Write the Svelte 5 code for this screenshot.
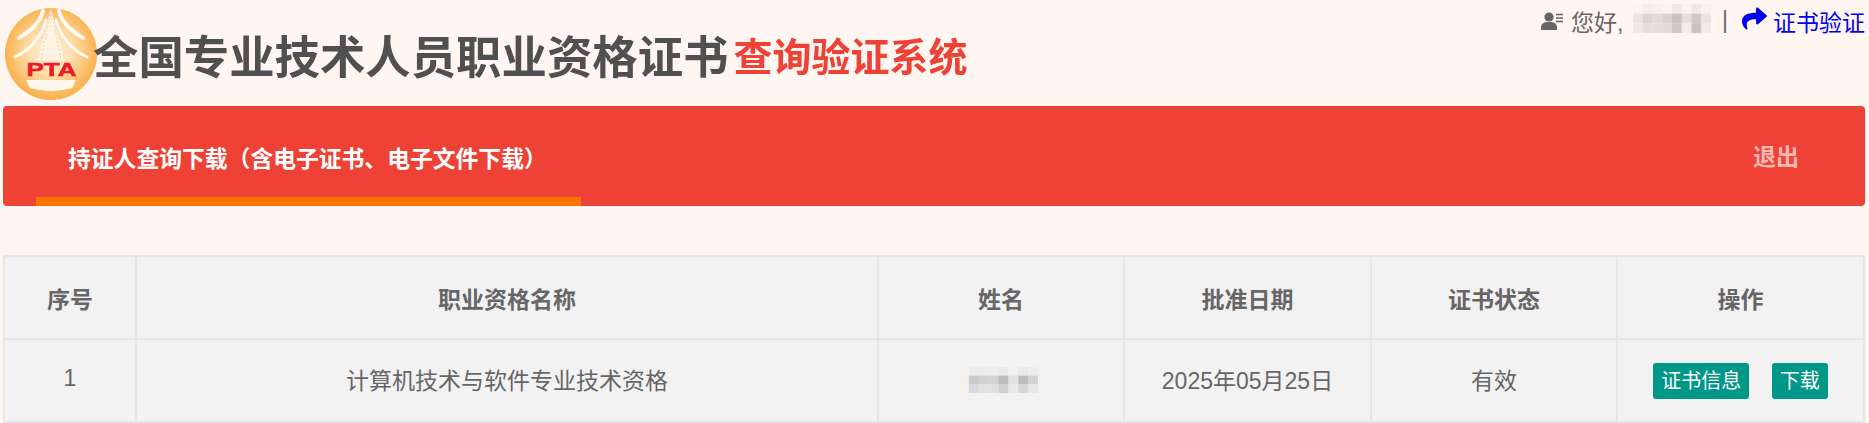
<script lang="ts">
    // mosaic blocks covering the person's name, row by row
    const topMosaic = [
        ["#fdf3ef", "#f5ecea", "#f8eeeb", "#fbf1ed", "#f2e9e6", "#fbf1ed", "#f0e7e4", "#faf0ec"],
        ["#ebe5e2", "#dbd5d3", "#e2dcd9", "#d9d4d1", "#c8c4c1", "#e6dfdc", "#cfcbc8", "#eae4e1"],
        ["#f0e9e6", "#e5dfdc", "#e3dddb", "#e2dcd9", "#cfcac7", "#f5ece8", "#c6c3c1", "#f3ebe8"],
    ];
    const nameMosaic = [
        ["#f6f1ec", "#e9ebec", "#ebebeb", "#ececec", "#e9eaea", "#f1f2f2", "#e8e8e6", "#ededec"],
        ["#f5efe9", "#c8c9ca", "#d0d3d4", "#d4d5d3", "#bcbcba", "#e0e3e3", "#bcbdba", "#d0d2d3"],
        ["#f6f0ea", "#d6d8dc", "#e0e1e0", "#e0e0de", "#cfd0cc", "#e7e8ea", "#d6d6d2", "#e5e6ea"],
    ];

    const columns = ["序号", "职业资格名称", "姓名", "批准日期", "证书状态", "操作"];
</script>

<svelte:head>
    <title>全国专业技术人员职业资格证书查询验证系统</title>
</svelte:head>

{#snippet mosaic(rows, cls)}
    <svg class={cls} viewBox="0 0 80 30" preserveAspectRatio="none" aria-hidden="true">
        {#each rows as row, y}
            {#each row as fill, x}
                <rect x={x * 10} y={y * 10} width="10.2" height="10.2" {fill} />
            {/each}
        {/each}
    </svg>
{/snippet}

<div class="page">
    <header>
        <div class="brand">
            <svg class="logo" viewBox="0 0 100 100" aria-hidden="true">
                <defs>
                    <radialGradient id="disc" cx="50%" cy="48%" r="50%">
                        <stop offset="0%" stop-color="#fff4e6" />
                        <stop offset="50%" stop-color="#fddcaa" />
                        <stop offset="100%" stop-color="#f9b24e" />
                    </radialGradient>
                </defs>
                <circle cx="51" cy="52" r="46" fill="url(#disc)" />
                <g fill="none" stroke="#fff8ef" stroke-linecap="round">
                    <path d="M43 9 C39 24 28 30 19 36" stroke-width="4" />
                    <path d="M59 9 C63 24 74 30 83 36" stroke-width="4" />
                    <path d="M46 18 C41 36 30 48 15 55" stroke-width="3" />
                    <path d="M56 18 C61 36 72 48 87 55" stroke-width="3" />
                </g>
                <path d="M51 6 L38 58 L64 58 Z" fill="#fff3e4" />
                <path d="M51 8 L41 58 M51 8 L61 58" stroke="#f6c9a5" stroke-width="1" stroke-dasharray="2 2" />
                <path d="M26 78 H76 L72 86 Q51 92 30 86 Z" fill="#fff8ef" />
                <text x="26.5" y="73.5" class="pta" textLength="50" lengthAdjust="spacingAndGlyphs">PTA</text>
            </svg>
            <h1>全国专业技术人员职业资格证书<span>查询验证系统</span></h1>
        </div>
        <div class="user">
            <svg class="user-icon" viewBox="0 0 24 18" aria-hidden="true">
                <circle cx="8" cy="5" r="4.6" fill="#666" />
                <path d="M0 18 V15.5 C0 12 3 10.2 5.5 10 H10.5 C13 10.2 16 12 16 15.5 V18 Z" fill="#666" />
                <path d="M15 2.5 H22 M15 6 H22 M15 9.5 H22" stroke="#666" stroke-width="1.4" />
            </svg>
            <span class="hello">您好,</span>
            {@render mosaic(topMosaic, "top-mosaic")}
            <span class="sep">|</span>
            <a href="#verify">
                <svg class="share" viewBox="0 0 512 512" aria-hidden="true">
                    <path d="M503.7 189.8 327.7 37.9C312.3 24.6 288 35.4 288 56v80C127.4 137.8 0 170 0 322.3c0 61.5 39.6 122.4 83.4 154.2 13.7 9.9 33.1-2.5 28.1-18.6C66 312.4 133 273.3 288 271v84c0 20.6 24.3 31.5 39.7 18.2l176-152c11.1-9.6 11.1-21.8 0-31.4z" fill="#0000ee" />
                </svg>
                证书验证
            </a>
        </div>
    </header>

    <nav>
        <a class="tab" href="#query">持证人查询下载（含电子证书、电子文件下载）</a>
        <a class="logout" href="#logout">退出</a>
    </nav>

    <table>
        <colgroup>
            <col class="c-no" />
            <col class="c-title" />
            <col class="c-std" />
            <col class="c-std2" />
            <col class="c-std" />
            <col class="c-std2" />
        </colgroup>
        <thead>
            <tr>
                {#each columns as col}
                    <th>{col}</th>
                {/each}
            </tr>
        </thead>
        <tbody>
            <tr>
                <td>1</td>
                <td>计算机技术与软件专业技术资格</td>
                <td>{@render mosaic(nameMosaic, "name-mosaic")}</td>
                <td>2025年05月25日</td>
                <td>有效</td>
                <td class="actions">
                    <button>证书信息</button>
                    <button>下载</button>
                </td>
            </tr>
        </tbody>
    </table>
</div>

<style>
    :global(body) {
        background: #fff5f1;
    }

    .page {
        font-family: "Liberation Sans", "Noto Sans CJK SC", sans-serif;
        color: #666;
        font-size: 23px;
    }

    header {
        height: 106px;
        display: flex;
        justify-content: space-between;
        align-items: flex-start;
        padding-right: 4px;
    }

    .brand {
        display: flex;
        align-items: flex-start;
    }

    .logo {
        width: 100px;
        height: 100px;
        margin-top: 2px;
        flex: none;
        filter: blur(0.5px);
    }

    .pta {
        font-family: "Liberation Sans", sans-serif;
        font-weight: 700;
        font-size: 19px;
        fill: #ee1c25;
        stroke: #ee1c25;
        stroke-width: 0.6;
    }

    h1 {
        margin: 21px 0 0 -7px;
        font-family: "Noto Sans CJK SC", sans-serif;
        font-size: 45.4px;
        line-height: 66px;
        font-weight: 700;
        color: #505050;
        white-space: nowrap;
        filter: blur(0.6px);
    }

    h1 span {
        margin-left: 5px;
        font-size: 39px;
        color: #ee4236;
        vertical-align: 3px;
    }

    .user {
        display: flex;
        align-items: center;
        height: 41px;
    }

    .user-icon {
        width: 24px;
        height: 18px;
        margin-right: 6px;
    }

    .hello {
        width: 62px;
        white-space: nowrap;
    }

    .top-mosaic {
        width: 78px;
        height: 29px;
        margin-top: -5px;
    }

    .sep {
        margin: 0 14px 0 11px;
    }

    .user a {
        display: flex;
        align-items: center;
        gap: 6px;
        color: #0000ee;
        text-decoration: none;
    }

    .share {
        width: 25px;
        height: 25px;
        margin-top: -5px;
    }

    nav {
        height: 100px;
        margin: 0 4px 0 3px;
        background: #ee4236;
        border-radius: 4px;
        display: flex;
        justify-content: space-between;
        align-items: stretch;
        font-weight: 700;
    }

    nav a {
        text-decoration: none;
    }

    .tab {
        box-sizing: border-box;
        width: 545px;
        margin-left: 33px;
        padding: 11px 0 0 32px;
        border-bottom: 9px solid #ff7300;
        display: flex;
        align-items: center;
        color: #fff;
        font-size: 22.8px;
        white-space: nowrap;
    }

    .logout {
        display: flex;
        align-items: center;
        margin-right: 66px;
        padding-bottom: 2px;
        color: #fbb9b1;
        font-size: 23px;
    }

    table {
        box-sizing: border-box;
        width: 1861px;
        margin: 49px 0 0 3px;
        table-layout: fixed;
        border-collapse: collapse;
        background: #f2f2f2;
    }

    .c-no {
        width: 132px;
    }

    .c-title {
        width: 742px;
    }

    .c-std {
        width: 246px;
    }

    .c-std2 {
        width: 247px;
    }

    th,
    td {
        height: 81px;
        padding: 0;
        border: 2px solid #e6e6e6;
        text-align: center;
        font-size: 23px;
        color: #666;
    }

    th {
        font-weight: 700;
    }

    tbody td {
        height: 77px;
        padding-bottom: 4px;
    }

    tbody td.actions {
        height: 81px;
        padding-bottom: 0;
    }

    .name-mosaic {
        width: 79px;
        height: 26px;
        display: block;
        margin: 2px 0 0 80px;
    }

    button {
        height: 36px;
        padding: 0 8px;
        border: 0;
        border-radius: 3px;
        background: #009688;
        color: #fff;
        font: inherit;
        font-size: 20px;
        line-height: 36px;
    }

    button + button {
        margin-left: 16px;
    }
</style>
